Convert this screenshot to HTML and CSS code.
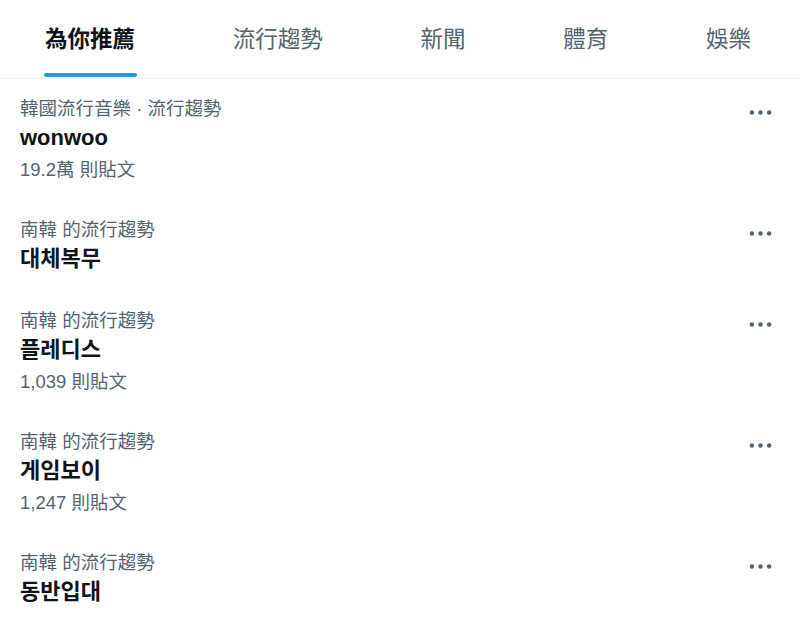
FILE: index.html
```html
<!DOCTYPE html>
<html lang="zh-Hant">

<head>
    <meta charset="UTF-8">
    <meta name="viewport" content="width=device-width, initial-scale=1.0">
    <title>流行趨勢</title>
    <link rel="stylesheet" href="styles.css">
</head>

<body>
    <!-- 分頁 -->
    <nav class="tabs">
        <a class="tab active"><span class="tab-label">為你推薦<i class="indicator"></i></span></a>
        <a class="tab"><span class="tab-label">流行趨勢</span></a>
        <a class="tab"><span class="tab-label">新聞</span></a>
        <a class="tab"><span class="tab-label">體育</span></a>
        <a class="tab"><span class="tab-label">娛樂</span></a>
    </nav>

    <!-- 趨勢列表 -->
    <ul class="trends">
        <li class="trend">
            <div class="trend-body">
                <p class="trend-cat">韓國流行音樂 · 流行趨勢</p>
                <p class="trend-title">wonwoo</p>
                <p class="trend-count">19.2萬 則貼文</p>
            </div>
            <svg class="more" viewBox="0 0 24 24"><circle cx="3" cy="12" r="2.3"/><circle cx="12" cy="12" r="2.3"/><circle cx="21" cy="12" r="2.3"/></svg>
        </li>
        <li class="trend">
            <div class="trend-body">
                <p class="trend-cat">南韓 的流行趨勢</p>
                <p class="trend-title" lang="ko">대체복무</p>
            </div>
            <svg class="more" viewBox="0 0 24 24"><circle cx="3" cy="12" r="2.3"/><circle cx="12" cy="12" r="2.3"/><circle cx="21" cy="12" r="2.3"/></svg>
        </li>
        <li class="trend">
            <div class="trend-body">
                <p class="trend-cat">南韓 的流行趨勢</p>
                <p class="trend-title" lang="ko">플레디스</p>
                <p class="trend-count">1,039 則貼文</p>
            </div>
            <svg class="more" viewBox="0 0 24 24"><circle cx="3" cy="12" r="2.3"/><circle cx="12" cy="12" r="2.3"/><circle cx="21" cy="12" r="2.3"/></svg>
        </li>
        <li class="trend">
            <div class="trend-body">
                <p class="trend-cat">南韓 的流行趨勢</p>
                <p class="trend-title" lang="ko">게임보이</p>
                <p class="trend-count">1,247 則貼文</p>
            </div>
            <svg class="more" viewBox="0 0 24 24"><circle cx="3" cy="12" r="2.3"/><circle cx="12" cy="12" r="2.3"/><circle cx="21" cy="12" r="2.3"/></svg>
        </li>
        <li class="trend">
            <div class="trend-body">
                <p class="trend-cat">南韓 的流行趨勢</p>
                <p class="trend-title" lang="ko">동반입대</p>
            </div>
            <svg class="more" viewBox="0 0 24 24"><circle cx="3" cy="12" r="2.3"/><circle cx="12" cy="12" r="2.3"/><circle cx="21" cy="12" r="2.3"/></svg>
        </li>
    </ul>
</body>

</html>
```

FILE: styles.css
```css
* {
    margin: 0;
    padding: 0;
    box-sizing: border-box;
    list-style: none;
}

html,
body {
    width: 100%;
    height: 100%;
    overflow: hidden;
}

body {
    background: #fff;
    color: #0f1419;
    font-family: "Liberation Sans", Arial, "Noto Sans CJK TC", sans-serif;
}

[lang="ko"] {
    font-family: "Liberation Sans", "Noto Sans CJK KR", sans-serif;
}

.tabs {
    display: flex;
    height: 79px;
    margin-left: -4px;
    border-bottom: solid 1px #eff3f4;
}

.tab {
    flex: 1 1 auto;
    display: flex;
    justify-content: center;
    font-size: 22.5px;
    color: #536471;
    cursor: pointer;
}

.tab-label {
    position: relative;
    display: flex;
    align-items: center;
    height: 78px;
    padding-bottom: 4px;
}

.tab.active {
    color: #0f1419;
    font-weight: bold;
}

.indicator {
    position: absolute;
    left: -1px;
    right: -2px;
    bottom: 1px;
    height: 4px;
    border-radius: 2px;
    background: #1d9bf0;
}

.trend {
    display: flex;
    align-items: flex-start;
    padding: 18px 28px 18px 20px;
}

.trend-body {
    flex: 1;
}

.trend-cat,
.trend-count {
    font-size: 18.5px;
    line-height: 23px;
    color: #536471;
}

.trend-title {
    margin-top: 3px;
    font-size: 22px;
    line-height: 29px;
    font-weight: bold;
}

.trend-count {
    margin-top: 6px;
    line-height: 24px;
}

.more {
    width: 23px;
    height: 23px;
    margin-top: 4px;
    fill: #536471;
}
```
